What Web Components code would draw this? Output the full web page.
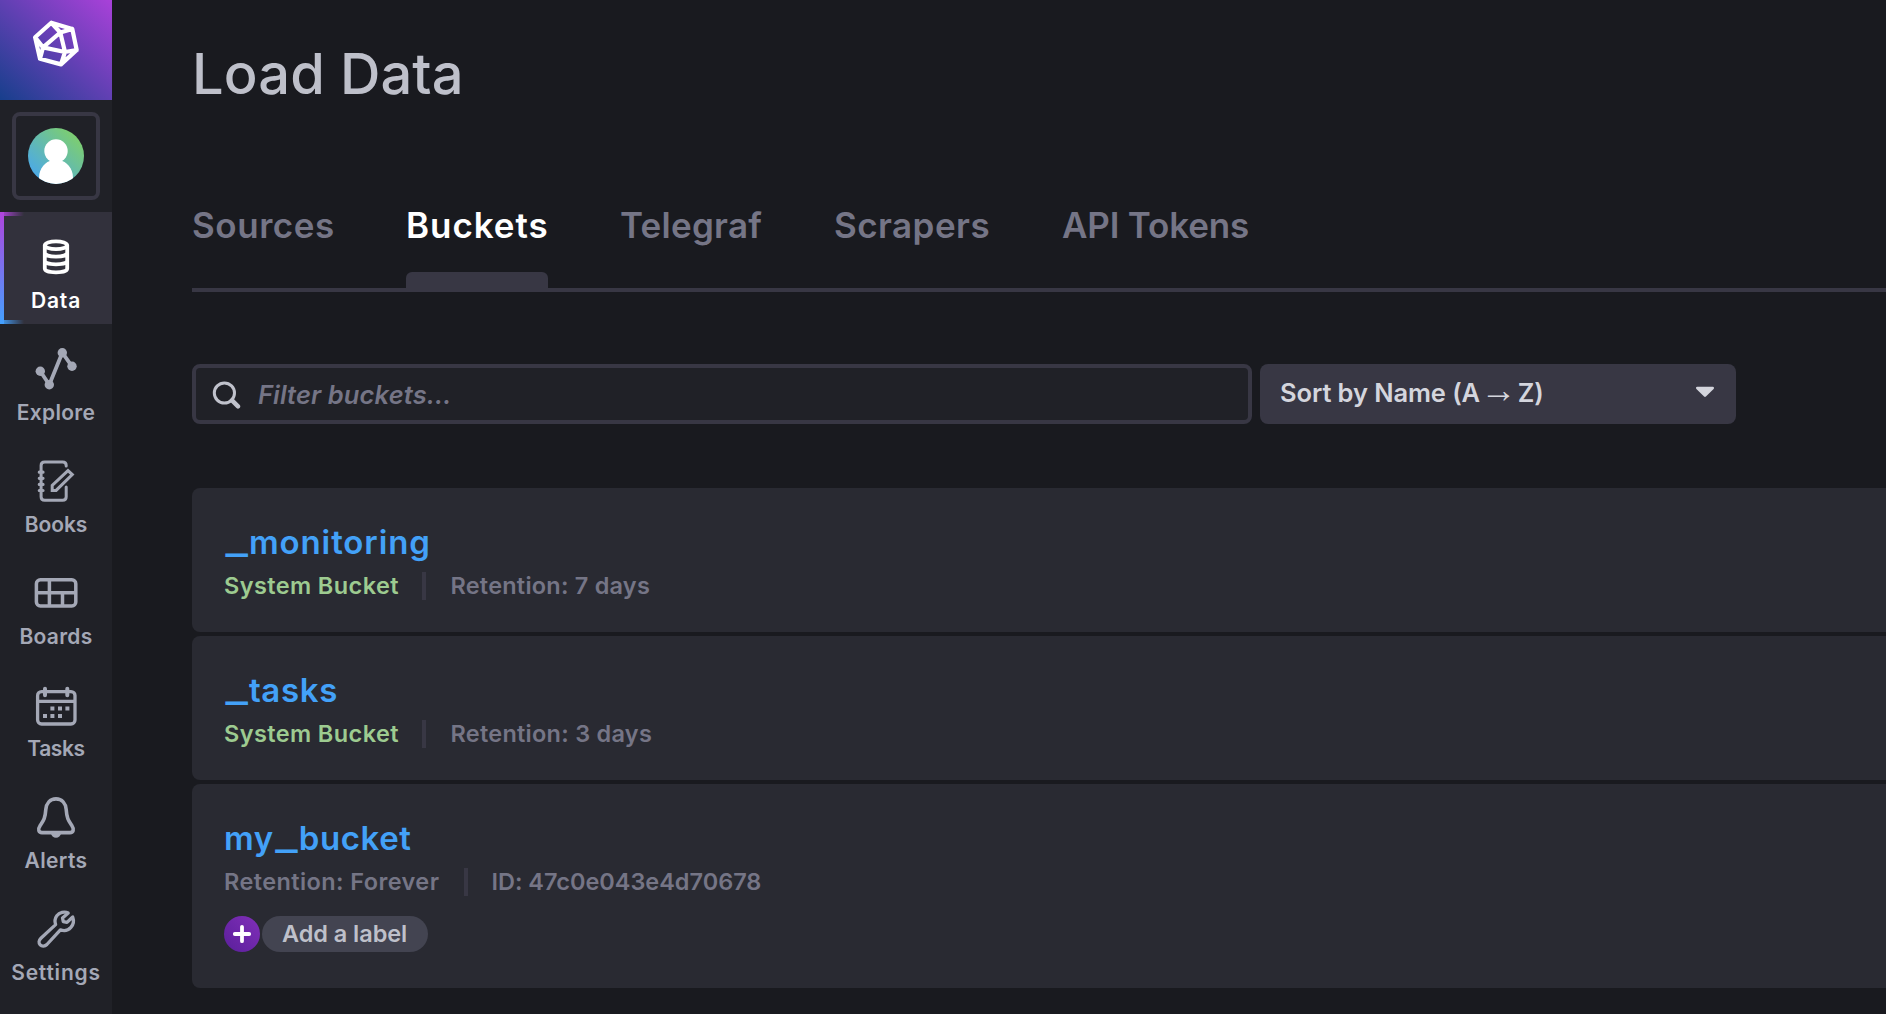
<!DOCTYPE html>
<html lang="en">
<head>
<meta charset="utf-8">
<title>Load Data</title>
<style>
html,body{margin:0;height:100%;background:#191a1f;overflow:hidden}
body{font-family:Inter,"Liberation Sans",sans-serif;font-weight:600}
</style>
</head>
<body>
<load-data-app></load-data-app>
<script>
function define(name, html, setup) {
  customElements.define(name, class extends HTMLElement {
    constructor() {
      super();
      this.attachShadow({mode: 'open'}).innerHTML = html;
    }
    connectedCallback() {
      if (setup) setup(this, this.shadowRoot);
    }
  });
}

const ICONS = {
  data: '<g stroke-width="3.8"><ellipse cx="24" cy="13.2" rx="11.2" ry="3.9"/><path d="M12.8 13.2V36.6C12.8 38.8 17.7 40.4 24 40.4S35.2 38.8 35.2 36.6V13.2M12.8 20.8C12.8 23 17.7 24.6 24 24.6S35.2 23 35.2 20.8M12.8 28.6C12.8 30.8 17.7 32.4 24 32.4S35.2 30.8 35.2 28.6"/></g>',
  explore: '<path stroke-width="3.8" d="M8.3 27.3L17.3 40.7L30.3 8.7L40 22.3"/><g fill="currentColor" stroke="none"><circle cx="8.3" cy="27.3" r="4.7"/><circle cx="17.3" cy="40.7" r="4.7"/><circle cx="30.3" cy="8.7" r="4.7"/><circle cx="40" cy="22.3" r="4.7"/></g>',
  books: '<g stroke-width="3"><path d="M34.2 10V9.5Q34.2 5.9 30.6 5.9H12.7Q9.1 5.9 9.1 9.5V40.7Q9.1 44.3 12.7 44.3H30.6Q34.2 44.3 34.2 40.7V31" stroke-linecap="round"/><path d="M7.3 16.2H11M7.3 22.3H11M7.3 28.4H11M7.3 34.5H11" stroke-width="3.2" stroke-linecap="round"/><path d="M20.2 34.4V29.3L36 14.6L40.3 18.6L24.1 34.4Z"/></g>',
  boards: '<g stroke-width="3.5"><rect x="4.4" y="11.8" width="39.4" height="26.2" rx="4"/><path d="M4.4 24.8H43.8M17.4 11.8V38M30.5 24.8V38"/></g>',
  tasks: '<g stroke-width="3.3"><rect x="5.6" y="11.6" width="37.4" height="32.4" rx="4"/><path d="M5.6 21.3H43"/><path stroke-width="4" stroke-linecap="round" d="M13 8.8V15.2M35.3 8.8V15.2"/></g><g fill="currentColor" stroke="none"><path d="M18.4 26.4h4v4h-4zM26 26.4h4v4h-4zM33.4 26.4h4v4h-4zM11 34h4v4h-4zM18.4 34h4v4h-4zM26 34h4v4h-4z"/></g>',
  alerts: '<path stroke-width="3.6" d="M24 6.9C18 6.9 14.3 11.4 13.8 17.5C13.2 26.5 11.4 28.6 8.2 33.5C5.6 37.4 6.6 40.6 10 40.6H38C41.4 40.6 42.4 37.4 39.8 33.5C36.6 28.6 34.8 26.5 34.2 17.5C33.7 11.4 30 6.9 24 6.9Z"/><path fill="currentColor" stroke="none" d="M18.8 41H29.2C28.6 44 26.6 45.8 24 45.8S19.4 44 18.8 41Z"/>',
  settings: '<path stroke-width="3.3" stroke-linejoin="round" d="M36.2 9C32.4 7 27.4 8.4 24.8 11.8C22.9 14.4 22.6 17.6 23.6 20.6L8.9 34.2C6.7 36.3 6.5 39.1 8.2 40.9C9.9 42.7 12.8 42.6 14.9 40.5L28.4 25.8C32 27.2 36.2 26.4 38.9 23.4C41.5 20.5 42 16.5 40.7 13L35 18.4L31.3 17.6L30.5 14Z"/>'
};

define('nav-logo', `<style>
:host{display:flex;justify-content:center;height:100px;flex:none;background:linear-gradient(42deg,#173f8c 0%,#a941d9 100%)}
svg{display:block;margin-top:16px;width:56px;height:56px}
</style>
<svg viewBox="28 16 56 56" fill="none" stroke="#fff" stroke-width="4.2" stroke-linejoin="round" stroke-linecap="round">
<path d="M51.3 22.8L72.3 29L76.7 50L61 64.4L40 58.7L35.1 37.3ZM60.3 32.5L43 47.4L65 52ZM51.3 22.8L60.3 32.5L72.3 29M35.1 37.3L43 47.4L40 58.7M76.7 50L65 52L61 64.4"/></svg>`);

define('user-avatar', `<style>
:host{display:flex;align-items:center;justify-content:center;box-sizing:border-box;flex:none;width:88px;height:88px;margin:12px;border:4px solid #383744;border-radius:8px}
svg{display:block}
</style>
<svg width="56" height="56" viewBox="0 0 56 56"><defs><linearGradient id="g" x1="0" y1="1" x2="1" y2="0"><stop offset=".1" stop-color="#4aa8ec"/><stop offset=".85" stop-color="#7ccd72"/></linearGradient><clipPath id="c"><circle cx="28" cy="28" r="28"/></clipPath></defs>
<circle cx="28" cy="28" r="28" fill="url(#g)"/><g fill="#fff" clip-path="url(#c)"><circle cx="28" cy="23" r="11.7"/><path d="M11 56V50C11 40 18 33.2 24 32.6H32C38 33.2 45 40 45 50V56Z"/></g></svg>`);

define('nav-item', `<style>
:host{display:flex;flex-direction:column;align-items:center;flex:none;box-sizing:border-box;height:112px;padding-top:20px;color:#a4a8b6}
:host([active]){color:#fff;background:
 linear-gradient(#b044dd,#43a1ff) 0 0/4px 100% no-repeat,
 linear-gradient(90deg,#b044dd,#b044dd00) 0 0/24px 4px no-repeat,
 linear-gradient(90deg,#43a1ff,#43a1ff00) 0 100%/24px 4px no-repeat,#32313c}
svg{display:block;width:48px;height:48px;margin-bottom:9px;fill:none;stroke:currentColor}
span{font-size:21px;line-height:24px;white-space:nowrap}
</style><svg viewBox="0 0 48 48"></svg><span><slot></slot></span>`, (el, root) => {
  root.querySelector('svg').innerHTML = ICONS[el.getAttribute('icon')];
});

define('nav-bar', `<style>
:host{display:flex;flex-direction:column;width:112px;flex:none;background:#202127}
nav-item:nth-of-type(1){letter-spacing:.8px}
nav-item:nth-of-type(2){letter-spacing:.3px}
nav-item:nth-of-type(3){letter-spacing:-.1px}
nav-item:nth-of-type(4){letter-spacing:.25px}
nav-item:nth-of-type(5){letter-spacing:-.4px}
nav-item:nth-of-type(6){letter-spacing:.35px}
nav-item:nth-of-type(7){letter-spacing:.78px}
</style><nav-logo></nav-logo><user-avatar></user-avatar>
<nav-item icon="data" active>Data</nav-item><nav-item icon="explore">Explore</nav-item><nav-item icon="books">Books</nav-item><nav-item icon="boards">Boards</nav-item><nav-item icon="tasks">Tasks</nav-item><nav-item icon="alerts">Alerts</nav-item><nav-item icon="settings">Settings</nav-item>`);

define('tab-item', `<style>
:host{display:flex;flex-direction:column;justify-content:space-between;flex:none;height:108px;color:#757586;font-size:35px;line-height:90px;white-space:nowrap}
:host([active]){color:#fff}
:host([active])::after{content:"";height:16px;border-radius:6px 6px 0 0;background:#383744}
</style><span><slot></slot></span>`);

define('tab-list', `<style>
:host{display:flex;gap:72px;border-bottom:4px solid #383744}
</style>
<tab-item style="width:142px;letter-spacing:.55px">Sources</tab-item><tab-item active style="width:142px;letter-spacing:.95px">Buckets</tab-item><tab-item style="width:142px;letter-spacing:.25px">Telegraf</tab-item><tab-item style="width:156px;letter-spacing:.45px">Scrapers</tab-item><tab-item style="letter-spacing:-.17px">API Tokens</tab-item>`);

define('search-field', `<style>
:host{display:flex;align-items:center;box-sizing:border-box;width:1060px;height:60px;padding-left:16px;gap:16px;border:4px solid #383744;border-radius:8px;background:#202127}
svg{display:block;flex:none}
span{color:#757586;font-style:italic;font-size:25.5px;line-height:30px;letter-spacing:.12px;padding-top:1px}
</style><svg width="30" height="30" viewBox="0 0 30 30" fill="none" stroke="#c0c2cc" stroke-linecap="round"><circle cx="12.4" cy="14" r="10.1" stroke-width="3"/><path d="M20 21.4L26 27.4" stroke-width="4.4"/></svg><span>Filter buckets...</span>`);

define('sort-dropdown', `<style>
:host{display:flex;align-items:center;justify-content:space-between;box-sizing:border-box;width:476px;height:60px;padding:0 21px 2px 20px;border-radius:8px;background:#383744;color:#d4d5dd;font-size:25.5px;line-height:30px;letter-spacing:-.1px}
i{font:400 36px/20px "Liberation Serif",serif;letter-spacing:0;word-spacing:-8.2px}
svg{display:block;margin-bottom:2px}
</style><span>Sort by Name (A<i> → </i>Z)</span><svg width="20" height="12" viewBox="0 0 20 12"><path d="M2.3 2H17.7L10 9.6Z" fill="#d4d5dd" stroke="#d4d5dd" stroke-width="2.6" stroke-linejoin="round"/></svg>`);

define('meta-row', `<style>
:host{display:flex;align-items:center;height:28px;font-size:23.5px;line-height:28px;color:#757586;white-space:nowrap}
::slotted(*:not(:first-child)){border-left:4px solid #383744;padding-left:24.5px}
::slotted(.system){color:#9dcb90}
</style><slot></slot>`);

define('add-label', `<style>
:host{display:flex;gap:2px;margin-top:20px}
.plus{display:flex;width:36px;height:36px;border-radius:50%;background:linear-gradient(45deg,#5a1f9b,#812fb9)}
.pill{box-sizing:border-box;width:166px;height:36px;padding-left:20px;border-radius:18px;background:#434451;color:#bec0ca;font-size:23.5px;line-height:35px;letter-spacing:-.05px;white-space:nowrap}
</style><div class="plus"><svg width="36" height="36" viewBox="0 0 36 36"><path d="M18 10.8V25.2M10.8 18H25.2" stroke="#fff" stroke-width="3.8" stroke-linecap="round"/></svg></div><div class="pill">Add a label</div>`);

define('bucket-card', `<style>
:host{display:block;box-sizing:border-box;height:144px;padding:38px 32px 0;border-radius:8px 0 0 8px;background:#292a32}
:host([tall]){height:204px}
h2{margin:0 0 14px;font-weight:600;font-size:33px;line-height:32px;height:32px;color:#43a1f8;white-space:nowrap}
</style><h2><slot name="title"></slot></h2><slot></slot>`);

define('bucket-list', `<style>
:host{display:flex;flex-direction:column;gap:4px}
u{text-decoration:none;font:700 34px/0 "Liberation Mono",monospace;letter-spacing:0;margin:0 2px 0 2.5px;vertical-align:2px;-webkit-text-stroke:2px currentColor}
</style>
<bucket-card><span slot="title" style="letter-spacing:.9px"><u>_</u>monitoring</span>
<meta-row><span class="system" style="width:198px;letter-spacing:.4px">System Bucket</span><span style="letter-spacing:.22px">Retention: 7 days</span></meta-row></bucket-card>
<bucket-card><span slot="title" style="letter-spacing:.65px"><u>_</u>tasks</span>
<meta-row><span class="system" style="width:198px;letter-spacing:.4px">System Bucket</span><span style="letter-spacing:.26px">Retention: 3 days</span></meta-row></bucket-card>
<bucket-card tall><span slot="title" style="letter-spacing:.6px">my<u>_</u>bucket</span>
<meta-row><span style="width:240px;letter-spacing:.41px">Retention: Forever</span><span style="letter-spacing:-.02px;padding-left:23.5px">ID: 47c0e043e4d70678</span></meta-row>
<add-label></add-label></bucket-card>`);

define('load-data-app', `<style>
:host{display:flex;height:100vh}
main{flex:1;min-width:0;padding:44px 0 0 80px}
h1{margin:0;font-weight:450;font-size:56px;line-height:60px;letter-spacing:.1px;color:#bec0ca}
tab-list{margin-top:76px}
.controls{display:flex;gap:8px;margin:72px 0 64px}
</style><nav-bar></nav-bar><main><h1>Load Data</h1><tab-list></tab-list><div class="controls"><search-field></search-field><sort-dropdown></sort-dropdown></div><bucket-list></bucket-list></main>`);
</script>
</body>
</html>
